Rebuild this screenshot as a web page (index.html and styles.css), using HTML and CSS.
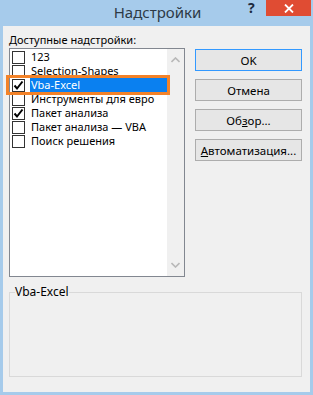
FILE: index.html
```html
<!DOCTYPE html>
<html lang="ru">
<head>
<meta charset="UTF-8">
<title>Надстройки</title>
<link rel="stylesheet" href="styles.css">
</head>
<body>
<div class="window">
  <div class="titlebar">
    <span class="title">Надстройки</span>
    <span class="help">?</span>
    <span class="close">
      <svg width="10" height="9" viewBox="0 0 10 9"><path d="M1 0.5 L9 8.5 M9 0.5 L1 8.5" stroke="#fff" stroke-width="1.8"/></svg>
    </span>
  </div>
  <div class="content">
    <div class="main">
      <div class="left">
        <div class="caption"><u>Д</u>оступные надстройки:</div>
        <div class="listbox">
          <div class="items">
            <div class="item"><span class="box"></span><span class="name">123</span></div>
            <div class="item"><span class="box"></span><span class="name">Selection-Shapes</span></div>
            <div class="item selected"><span class="box checked"><svg width="11" height="11" viewBox="0 0 11 11"><path d="M1.5 5.5 L4 8.5 L9.5 1.5" stroke="#000" stroke-width="2" fill="none"/></svg></span><span class="name">Vba-Excel</span></div>
            <div class="item"><span class="box"></span><span class="name">Инструменты для евро</span></div>
            <div class="item"><span class="box checked"><svg width="11" height="11" viewBox="0 0 11 11"><path d="M1.5 5.5 L4 8.5 L9.5 1.5" stroke="#000" stroke-width="2" fill="none"/></svg></span><span class="name">Пакет анализа</span></div>
            <div class="item"><span class="box"></span><span class="name">Пакет анализа — VBA</span></div>
            <div class="item"><span class="box"></span><span class="name">Поиск решения</span></div>
          </div>
          <div class="scrollbar">
            <svg width="9" height="6" viewBox="0 0 9 6"><path d="M0.5 5 L4.5 1 L8.5 5" stroke="#b8b8b8" stroke-width="1.6" fill="none"/></svg>
            <svg width="9" height="6" viewBox="0 0 9 6"><path d="M0.5 1 L4.5 5 L8.5 1" stroke="#b8b8b8" stroke-width="1.6" fill="none"/></svg>
          </div>
        </div>
        <div class="highlight"></div>
      </div>
      <div class="buttons">
        <button class="btn default">OK</button>
        <button class="btn">Отмена</button>
        <button class="btn">Об<u>з</u>ор...</button>
        <button class="btn"><u>А</u>втоматизация...</button>
      </div>
    </div>
    <fieldset class="group">
      <legend>Vba-Excel</legend>
    </fieldset>
  </div>
</div>
</body>
</html>
```

FILE: styles.css
```css
body {
  margin: 0;
  font-family: "Noto Sans", "Open Sans", sans-serif;
  font-size: 11px;
  color: #000;
}
.window {
  width: 313px;
  height: 395px;
  background-color: #a6cbeb;
  display: flex;
  flex-direction: column;
}
.titlebar {
  height: 26px;
  position: relative;
  display: flex;
  justify-content: center;
}
.title {
  font-size: 15px;
  color: #2d3a46;
  line-height: 24px;
  margin-left: 2px;
}
.help {
  position: absolute;
  left: 248px;
  top: 0;
  font-size: 14px;
  line-height: 16px;
  font-weight: bold;
  color: #1c2a3e;
}
.close {
  position: absolute;
  left: 266px;
  top: 0;
  width: 45px;
  height: 16px;
  background-color: #e04c33;
  display: flex;
  align-items: center;
  justify-content: center;
}
.content {
  margin: 0 3px 3px 3px;
  flex: 1;
  background-color: #f0f0f0;
  padding: 7px 8px 9px 6px;
  display: flex;
  flex-direction: column;
}
.main {
  display: flex;
  gap: 10px;
}
.left {
  position: relative;
}
.caption {
  height: 15px;
  line-height: 14px;
}
.listbox {
  width: 174px;
  height: 227px;
  border: 1px solid #828790;
  background-color: #fff;
  display: flex;
}
.items {
  flex: 1;
  padding-top: 1px;
}
.item {
  height: 14px;
  display: flex;
  align-items: center;
}
.box {
  width: 11px;
  height: 11px;
  border: 1px solid #333;
  background-color: #fff;
  margin-left: 2px;
  margin-right: 5px;
  display: flex;
  align-items: center;
  justify-content: center;
}
.name {
  height: 14px;
  line-height: 14px;
  padding-left: 1px;
}
.item.selected .name {
  flex: 1;
  background-color: #0a80f0;
  color: #fff;
}
.scrollbar {
  width: 17px;
  background-color: #f0f0f0;
  display: flex;
  flex-direction: column;
  justify-content: space-between;
  align-items: center;
  padding: 8px 0 8px;
}
.highlight {
  position: absolute;
  left: -3px;
  top: 42px;
  width: 158px;
  height: 14px;
  border: 3px solid #f38228;
}
.buttons {
  display: flex;
  flex-direction: column;
  gap: 8px;
  padding-top: 16px;
}
.btn {
  width: 107px;
  height: 22px;
  font-family: "Noto Sans", "Open Sans", sans-serif;
  font-size: 11.5px;
  color: #000;
  background-color: #e6e6e6;
  border: 1px solid #adadad;
  padding: 0;
}
.btn.default {
  border-color: #3399ff;
}
.group {
  margin: 9px 0 0 0;
  padding: 0;
  height: 89px;
  border: 1px solid #d9d9d9;
  width: 291px;
}
.group legend {
  padding: 0;
  margin-left: 5px;
  line-height: 12px;
  font-size: 12px;
}
```
